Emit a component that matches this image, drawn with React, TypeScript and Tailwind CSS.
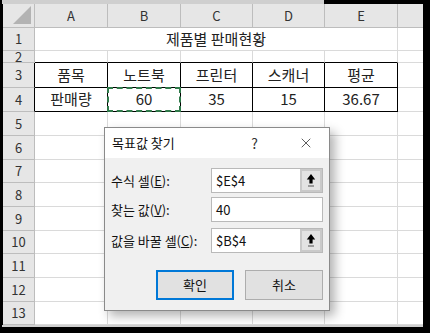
import { X } from 'lucide-react';

const cols = ['A', 'B', 'C', 'D', 'E', ''];
const rowHeights = [23, 12, 25, 24, 24, 24, 23, 24, 24, 23, 24, 24, 23];

function UpArrow() {
  return (
    <svg width="10" height="15" viewBox="0 0 10 15">
      <path d="M5 1 L9.2 6.5 H6.6 V10.5 H3.4 V6.5 H0.8 Z" fill="#000" />
      <line x1="2" y1="13" x2="8" y2="13" stroke="#555" strokeWidth="1" />
    </svg>
  );
}

function Cell({ row, col }: { row: number; col: number }) {
  const inTable = (row === 3 || row === 4) && col < 5;
  const aboveTable = row === 2 && col < 5;
  const text: Record<string, string> = {
    '3-0': '품목',
    '3-1': '노트북',
    '3-2': '프린터',
    '3-3': '스캐너',
    '3-4': '평균',
    '4-0': '판매량',
    '4-1': '60',
    '4-2': '35',
    '4-3': '15',
    '4-4': '36.67',
  };
  let cls = 'relative flex items-center justify-center bg-white border-r border-b text-[15px] text-[#222] ';
  if (inTable) cls += 'border-black';
  else if (aboveTable) cls += 'border-r-[#dadada] border-b-black';
  else cls += 'border-[#dadada]';
  if (col === 5) cls += ' border-r-0';
  return (
    <div className={cls}>
      {text[`${row}-${col}`]}
      {row === 4 && col === 1 && (
        <div className="absolute inset-[-1px] border-2 border-dashed border-[#2f7a4a]" />
      )}
    </div>
  );
}

export default function App() {
  return (
    <div
      className="relative w-[430px] h-[333px] bg-black overflow-hidden"
      style={{ fontFamily: '"Noto Sans CJK KR", "Noto Sans", sans-serif' }}
    >
      <div className="h-[4px] w-[322px] bg-[#cfcfcf] ml-[2px]" />
      <div
        className="ml-[3px] w-[420px] grid grid-cols-[32px_73px_73px_72px_72px_73px_25px]"
        style={{ gridTemplateRows: `24px ${rowHeights.map((h) => h + 'px').join(' ')}` }}
      >
        {/* corner */}
        <div className="bg-[#e6e6e6] border-r border-b border-[#bdbdbd] flex items-end justify-end p-[3px]">
          <svg width="18" height="18" viewBox="0 0 18 18">
            <path d="M18 0 L18 18 L0 18 Z" fill="#b3b3b3" />
          </svg>
        </div>
        {cols.map((c, i) => (
          <div
            key={'h' + i}
            className={
              'bg-[#e6e6e6] border-b border-[#bdbdbd] flex items-center justify-center text-[13px] text-[#333] ' +
              (i < 5 ? 'border-r' : '')
            }
          >
            {c}
          </div>
        ))}
        {rowHeights.map((_, r) => {
          const row = r + 1;
          const header = (
            <div
              key={'r' + row}
              className={
                'bg-[#e6e6e6] border-r border-b border-[#bdbdbd] flex items-center justify-center text-[13px] text-[#333] overflow-hidden ' +
                (row === 3 || row === 4 ? 'border-r-black' : '')
              }
            >
              {row}
            </div>
          );
          if (row === 1) {
            return [
              header,
              <div
                key="title"
                className="col-span-5 bg-white border-r border-b border-[#dadada] flex items-center justify-center text-[15px] text-[#222]"
              >
                제품별 판매현황
              </div>,
              <div key="t-f" className="bg-white border-b border-[#dadada]" />,
            ];
          }
          return [header, ...cols.map((_, c) => <Cell key={row + '-' + c} row={row} col={c} />)];
        })}
      </div>
      <div className="h-[2px] w-[421px] ml-[2px] bg-[#cfcfcf]" />

      {/* Goal seek dialog */}
      <div className="absolute left-[104px] top-[127px] w-[226px] h-[184px] border border-[#8a8a8a] bg-[#f0f0f0] shadow-[5px_5px_10px_rgba(0,0,0,0.3)] flex flex-col text-[13px] text-[#111]">
        <div className="h-[30px] bg-white flex items-center pl-[7px] pr-[15px]">
          <span>목표값 찾기</span>
          <span className="ml-auto mr-[40px] text-[14px] text-[#333]">?</span>
          <X size={16} strokeWidth={1.2} color="#333" />
        </div>
        <div className="flex flex-col pl-[6px] pr-[6px] pt-[10px]">
          <div className="flex items-center h-[25px]">
            <span className="flex-1">
              수식 셀(<span className="underline">E</span>):
            </span>
            <div className="w-[112px] h-[25px] bg-white border border-[#b9b9b9] flex items-center">
              <span className="flex-1 pl-[4px]">$E$4</span>
              <div className="w-[22px] h-full bg-[#e3e3e3] border-2 border-[#c9c9c9] flex items-center justify-center">
                <UpArrow />
              </div>
            </div>
          </div>
          <div className="flex items-center h-[25px] mt-[4px]">
            <span className="flex-1">
              찾는 값(<span className="underline">V</span>):
            </span>
            <div className="w-[112px] h-[25px] bg-white border border-[#b9b9b9] flex items-center pl-[4px]">
              40
            </div>
          </div>
          <div className="flex items-center h-[25px] mt-[6px]">
            <span className="flex-1">
              값을 바꿀 셀(<span className="underline">C</span>):
            </span>
            <div className="w-[112px] h-[25px] bg-white border border-[#b9b9b9] flex items-center">
              <span className="flex-1 pl-[4px]">$B$4</span>
              <div className="w-[22px] h-full bg-[#e3e3e3] border-2 border-[#c9c9c9] flex items-center justify-center">
                <UpArrow />
              </div>
            </div>
          </div>
          <div className="flex justify-end gap-[11px] mt-[17px]">
            <div className="w-[78px] h-[30px] bg-[#e1e1e1] border-2 border-[#0078d7] flex items-center justify-center">
              확인
            </div>
            <div className="w-[78px] h-[30px] bg-[#e1e1e1] border border-[#adadad] flex items-center justify-center">
              취소
            </div>
          </div>
        </div>
      </div>
    </div>
  );
}
